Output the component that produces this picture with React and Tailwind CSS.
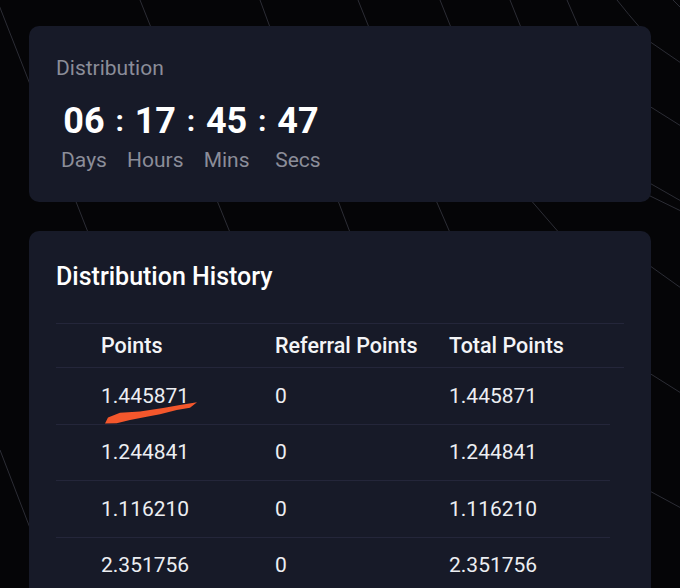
import React from "react";

const FONT = { fontFamily: "Roboto, 'Noto Sans', 'Liberation Sans', sans-serif" };

const units = [
  { value: "06", label: "Days" },
  { value: "17", label: "Hours" },
  { value: "45", label: "Mins" },
  { value: "47", label: "Secs" },
];

const rows = [
  ["1.445871", "0", "1.445871"],
  ["1.244841", "0", "1.244841"],
  ["1.116210", "0", "1.116210"],
  ["2.351756", "0", "2.351756"],
  ["1.902317", "0", "1.902317"],
];

// Faint perspective grid behind the cards
function GridLines() {
  const segs = [
    [-3, 0, 91, 240],
    [140, 0, 152, 30],
    [260, 0, 271, 30],
    [358, 0, 370, 30],
    [440, 0, 452, 30],
    [510, 0, 522, 30],
    [567, 0, 580, 30],
    [673, 0, 681, 8],
    [216, 198, 231, 235],
    [337, 198, 351, 235],
    [435, 198, 451, 235],
    [529, 198, 561, 235],
    [646, 194, 681, 211],
    [646, 39, 681, 63],
    [646, 104, 681, 126],
    [646, 181, 681, 201],
    [646, 263, 681, 288],
    [646, 371, 681, 393],
    [646, 489, 681, 508],
    [0, 450, 30, 528],
  ];
  return (
    <svg className="absolute inset-0 pointer-events-none" width="680" height="588" viewBox="0 0 680 588">
      <path d="M617 0 Q628 14 642 30" stroke="#2c2d35" strokeWidth="1" fill="none" />
      {segs.map(([x1, y1, x2, y2], i) => (
        <line key={i} x1={x1} y1={y1} x2={x2} y2={y2} stroke="#2c2d35" strokeWidth="1" />
      ))}
    </svg>
  );
}

function Countdown() {
  return (
    <div className="flex ml-[4px]">
      {units.map((u, i) => (
        <React.Fragment key={u.label}>
          <div className="flex flex-col items-center w-[48px]">
            <span className="text-[36px] leading-[44px] font-bold text-white">{u.value}</span>
            <span className="mt-[3px] text-[21px] leading-[28px] text-[#8b8d99]">{u.label}</span>
          </div>
          {i < units.length - 1 && (
            <div className="w-[23.3px] flex justify-center">
              <span className="text-[30px] leading-[44px] font-bold text-white">:</span>
            </div>
          )}
        </React.Fragment>
      ))}
    </div>
  );
}

export default function App() {
  return (
    <div className="relative w-[680px] h-[588px] overflow-hidden bg-[#050507]" style={FONT}>
      <GridLines />
      <div className="relative flex flex-col gap-[29px] px-[29px] pt-[26px]">
        <section className="rounded-[10px] bg-[#171a28] px-[27px] py-[28px]">
          <h2 className="text-[21px] leading-[28px] text-[#8b8d99]">Distribution</h2>
          <div className="mt-[17px]">
            <Countdown />
          </div>
        </section>

        <section className="rounded-[10px] bg-[#171a28] px-[27px] pt-[30px] pb-6">
          <h2 className="text-[25px] leading-[32px] font-medium text-white">Distribution History</h2>
          <div className="mt-[30px]">
            <div className="grid grid-cols-[174px_174px_1fr] pl-[45px] border-y border-[#24263a] py-[7.5px] text-[21.5px] leading-[28px] font-medium text-[#f3f4f7]">
              <span>Points</span>
              <span>Referral Points</span>
              <span>Total Points</span>
            </div>
            {rows.map((r, i) => (
              <div
                key={i}
                className="grid grid-cols-[174px_174px_1fr] pl-[45px] mr-[14px] border-b border-[#24263a] py-[13.75px] text-[21px] leading-[28px] text-[#eceef2]"
              >
                <span>{r[0]}</span>
                <span>{r[1]}</span>
                <span>{r[2]}</span>
              </div>
            ))}
          </div>
        </section>
      </div>

      {/* hand-drawn marker stroke under the first value */}
      <svg className="absolute inset-0 pointer-events-none" width="680" height="588" viewBox="0 0 680 588">
        <polygon
          points="105,423.5 108,417.5 120,412.7 140,411.5 163,408 180,405 197,402.3 190,407.7 176.7,410 160,414.3 146.7,416.7 130,420 116.7,423.3"
          fill="#f4572c"
        />
      </svg>
    </div>
  );
}
